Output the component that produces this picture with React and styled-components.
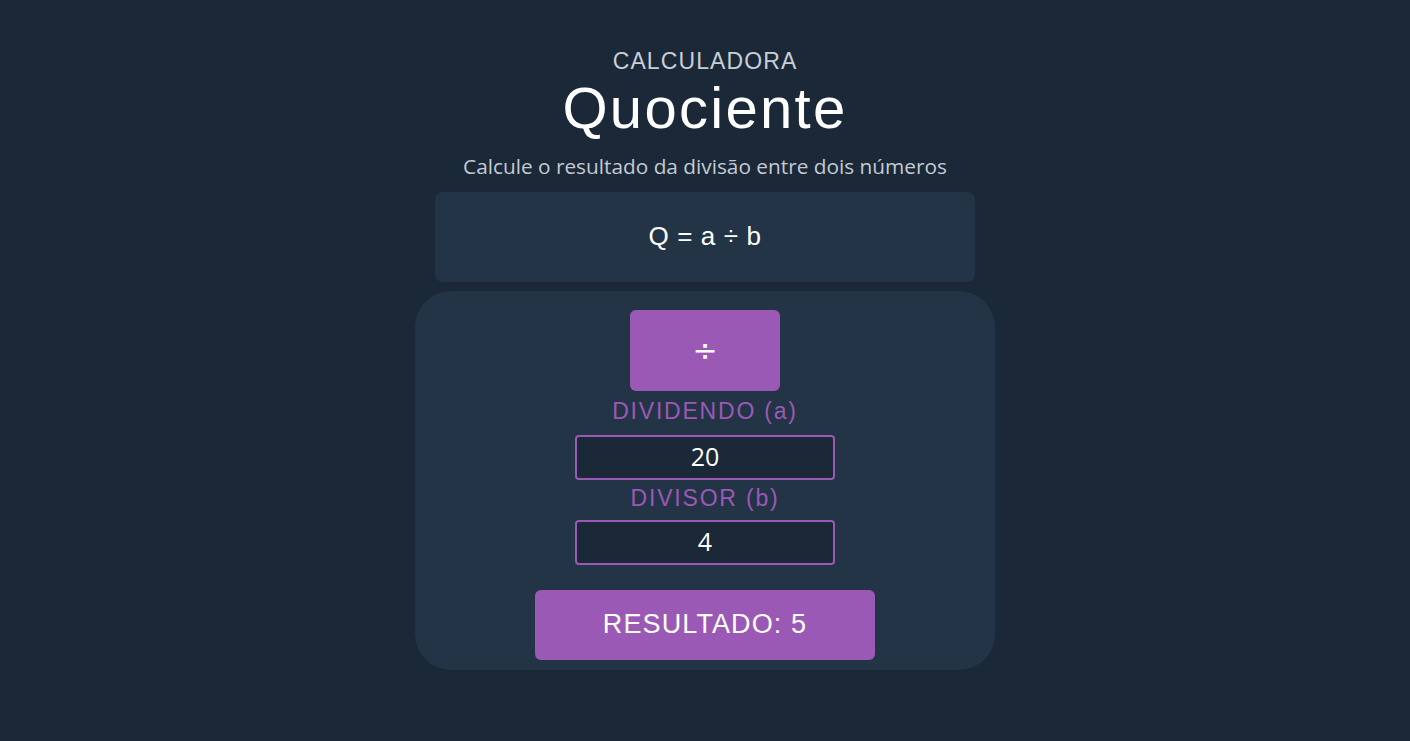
import React, { useState } from "react";
import styled, { createGlobalStyle } from "styled-components";

const GlobalStyle = createGlobalStyle`
  html, body {
    margin: 0;
    padding: 0;
    background: #1b2838;
  }
  * { box-sizing: border-box; }
`;

const Page = styled.main`
  min-height: 741px;
  display: flex;
  flex-direction: column;
  align-items: center;
  padding-top: 47px;
  font-family: "Liberation Sans", Arial, sans-serif;
  color: #ffffff;
`;

const Kicker = styled.div`
  font-size: 23px;
  line-height: 28px;
  color: #c9ced6;
  letter-spacing: 1.1px;
`;

const Title = styled.h1`
  margin: 0;
  font-size: 58px;
  line-height: 66px;
  font-weight: 400;
  letter-spacing: 2.3px;
  color: #ffffff;
`;

const Subtitle = styled.p`
  margin: 12px 0 0;
  font-family: "Open Sans", "Noto Sans", sans-serif;
  font-size: 20.8px;
  line-height: 26px;
  color: #c4cad3;
`;

const Formula = styled.div`
  margin-top: 13px;
  width: 540px;
  height: 90px;
  border-radius: 8px;
  background: #233447;
  display: flex;
  align-items: center;
  justify-content: center;
  padding-bottom: 2px;
  font-size: 26px;
  letter-spacing: 0.6px;
  color: #ffffff;
`;

const Card = styled.section`
  margin-top: 9px;
  width: 580px;
  border-radius: 36px;
  background: #233447;
  display: flex;
  flex-direction: column;
  align-items: center;
  padding: 19px 0 10px;
`;

const OpButton = styled.button`
  width: 150px;
  height: 81px;
  border: none;
  border-radius: 6px;
  background: #9b59b6;
  color: #ffffff;
  font-family: "DejaVu Sans", sans-serif;
  font-size: 30px;
  display: flex;
  align-items: center;
  justify-content: center;
  cursor: pointer;
`;

const Label = styled.label`
  margin-top: ${(p) => p.$top}px;
  font-size: 23px;
  line-height: 28px;
  letter-spacing: 1.8px;
  color: #9b59b6;
`;

const NumberInput = styled.input`
  margin-top: ${(p) => p.$top}px;
  width: 260px;
  height: 45px;
  border: 2px solid #9b59b6;
  border-radius: 4px;
  background: #1b2838;
  color: #ffffff;
  text-align: center;
  font-family: "Open Sans", "Noto Sans", sans-serif;
  font-size: 25px;
  outline: none;
  padding: 0 0 3px;
`;

const ResultButton = styled.button`
  margin-top: 25px;
  width: 340px;
  height: 70px;
  border: none;
  border-radius: 6px;
  background: #9b59b6;
  color: #ffffff;
  font-family: "Liberation Sans", Arial, sans-serif;
  font-size: 27px;
  letter-spacing: 1.1px;
  padding-bottom: 2px;
  cursor: pointer;
`;

export default function App() {
  const [a, setA] = useState("20");
  const [b, setB] = useState("4");
  const q = Number(b) !== 0 ? Number(a) / Number(b) : "—";

  return (
    <>
      <GlobalStyle />
      <Page>
        <Kicker>CALCULADORA</Kicker>
        <Title>Quociente</Title>
        <Subtitle>Calcule o resultado da divisão entre dois números</Subtitle>
        <Formula>Q = a ÷ b</Formula>
        <Card>
          <OpButton>÷</OpButton>
          <Label $top={6}>DIVIDENDO (a)</Label>
          <NumberInput $top={10} value={a} onChange={(e) => setA(e.target.value)} />
          <Label $top={4}>DIVISOR (b)</Label>
          <NumberInput $top={8} value={b} onChange={(e) => setB(e.target.value)} />
          <ResultButton>RESULTADO: {q}</ResultButton>
        </Card>
      </Page>
    </>
  );
}
